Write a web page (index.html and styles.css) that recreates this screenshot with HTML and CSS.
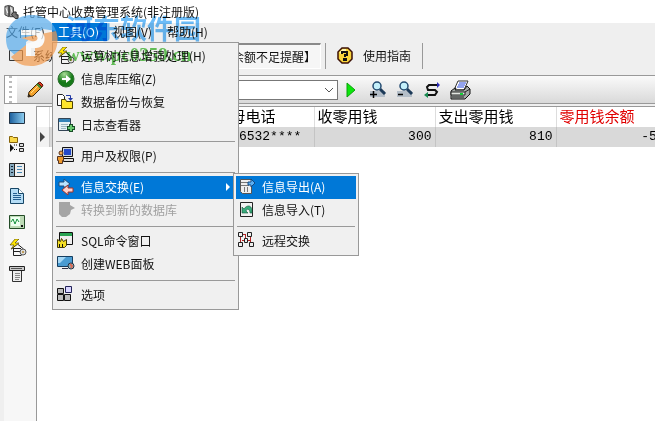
FILE: index.html
```html
<!DOCTYPE html>
<html lang="zh-CN">
<head>
  <meta charset="UTF-8">
  <title>托管中心收费管理系统(非注册版)</title>
  <link rel="stylesheet" href="styles.css">
</head>
<body>
  <header class="titlebar">
    <svg class="app-icon" viewBox="0 0 16 16"><path d="M1 2l4-1v12l-4-2zM6 1l4 2v10H6z" fill="#aaa" stroke="#333"/><path d="M2 4l2 5M7 3l2 6" stroke="#fff"/><path d="M10 8h3v3h2v4h-3l-4-4z" fill="#777" stroke="#222"/></svg>
    <span>托管中心收费管理系统(非注册版)</span>
  </header>

  <nav class="menubar">
    <button>文件(F)</button>
    <button class="open">工具(O)</button>
    <button>视图(V)</button>
    <button>帮助(H)</button>
  </nav>

  <div class="mainbar">
    <button class="system">
      <svg width="16" height="16" viewBox="0 0 16 16"><path d="M1.500 2.500h13v10h-13z" fill="#dde3e6" stroke="#333"/></svg>
      系统
    </button>
    <div class="notice">【余额不足提醒】</div>
    <button class="guide">
      <svg width="18" height="18" viewBox="0 0 18 18"><path d="M6 1h6l4 4v7l-4 4H6l-4-4V5z" fill="#f8d43c" stroke="#3c1004" stroke-width="1.500"/><path d="M4 6l3-3h3" fill="none" stroke="#fff6b0" stroke-width="2"/><path d="M6 7V5h5v3H9v2M8 12h2v1H8z" fill="none" stroke="#111" stroke-width="2"/></svg>
      使用指南
    </button>
  </div>

  <div class="toolbar">
    <div class="grip"></div>
    <button class="edit" title="编辑"><svg width="18" height="18" viewBox="0 0 18 18"><path d="M2 16l1-5L12 2l4 4-9 9z" fill="#f4a32c" stroke="#3a2509"/><path d="M5 12l7-7" stroke="#ffe08a"/><path d="M11 3l4 4" stroke="#3d8a32" stroke-width="2"/><path d="M12 2l2-1 3 3-1 2z" fill="#e33c22" stroke="#5a1408"/><path d="M2 16l1-3 2 2z" fill="#222"/></svg></button>
    <div class="combo">
      <select aria-label="查询条件"><option></option></select>
      <svg width="10" height="6" viewBox="0 0 10 6"><path d="M1 1l4 4 4-4" fill="none" stroke="#555"/></svg>
    </div>
    <button title="执行"><svg width="18" height="18" viewBox="0 0 18 18"><path d="M5 2v14l8-7z" fill="#0de60d" stroke="#0aa20a"/></svg></button>
    <button title="放大"><svg width="18" height="18" viewBox="0 0 18 18"><path d="M1 10h15v6H1z" fill="#b4bec8"/><path d="M11 8l5 5" stroke="#1d3a58" stroke-width="3"/><circle cx="8" cy="5" r="4" fill="#c4f0fb" stroke="#234a70" stroke-width="1.500"/><path d="M1 13.500h7M4.500 10v7" stroke="#000" stroke-width="1.500"/></svg></button>
    <button title="缩小"><svg width="18" height="18" viewBox="0 0 18 18"><path d="M1 10h15v6H1z" fill="#b4bec8"/><path d="M11 8l5 5" stroke="#1d3a58" stroke-width="3"/><circle cx="8" cy="5" r="4" fill="#c4f0fb" stroke="#234a70" stroke-width="1.500"/><path d="M2 13.500h5" stroke="#000" stroke-width="1.500"/></svg></button>
    <button title="刷新"><svg width="18" height="18" viewBox="0 0 18 18"><path d="M15 4H6L4 6l1 3h7l2 2-2 3H3" fill="none" stroke="#111" stroke-width="2"/><path d="M14 1l3 3-3 3z" fill="#2828b8"/><path d="M5 11v6l-4-3z" fill="#188a50"/></svg></button>
    <button class="print" title="打印"><svg width="22" height="20" viewBox="0 0 22 20"><path d="M8 1h10l-4 9H4z" fill="#fff" stroke="#333"/><path d="M9 3h7M8 5h7M7 7h7" stroke="#2848dc"/><path d="M1 11l4-3h1l-1 2h9l3-4 3 3v5l-5 5H1z" fill="#a5aaa8" stroke="#111"/><path d="M1 12h14v3H1z" fill="#e2e6e1" stroke="#222"/><path d="M15 12l5-3M2 17h12" stroke="#222"/><path d="M10 13h3v2h-3z" fill="#13cd36"/></svg></button>
  </div>

  <main class="workspace">
    <aside class="sidebar">
      <button title="桌面"><svg width="16" height="16" viewBox="0 0 16 16"><defs><linearGradient id="screen"><stop stop-color="#1b5e9c"/><stop offset="1" stop-color="#8fd0f2"/></linearGradient></defs><path d="M.5 2.500h15v11H.5z" fill="url(#screen)" stroke="#234"/></svg></button>
      <button title="结构"><svg width="16" height="16" viewBox="0 0 16 16"><path d="M.5.5h3l1 1h4v5h-8z" fill="#f9d84a" stroke="#86640b"/><path d="M1 8l4 4-4 4z" fill="#111"/><path d="M5 9h4M5 13.500h4" fill="none" stroke="#111" stroke-dasharray="1 1"/><path d="M10.500 7.500h4v3h-4zM10.500 12.500h4v3h-4z" fill="#ddd" stroke="#222"/></svg></button>
      <button title="列表"><svg width="16" height="16" viewBox="0 0 16 16"><path d="M.5 1.500h15v13H.5z" fill="#eee" stroke="#222"/><path d="M1 2h4v12H1z" fill="#87aabf"/><path d="M5.500 2v12" stroke="#222"/><path d="M2 4.500h2M2 7.500h2M2 10.500h2" stroke="#123"/><path d="M8 4.500h5M8 7.500h5M8 10.500h5" stroke="#4688b4"/></svg></button>
      <button title="文档"><svg width="16" height="16" viewBox="0 0 16 16"><path d="M1.500.5h8l5 5v10h-13z" fill="#b5ddf6" stroke="#174666"/><path d="M9.500.5v5h5" fill="#fff" stroke="#174666"/><path d="M4 5.500h4M4 7.500h8M4 9.500h8M4 11.500h8" stroke="#245f91"/></svg></button>
      <button title="监视"><svg width="16" height="16" viewBox="0 0 16 16"><path d="M.5 1.500h15v13H.5z" fill="#bddbb6" stroke="#234b27"/><path d="M2 3h9v9H2z" fill="#edfff0"/><path d="M2 8l2-3 2 5 2-5 2 3" fill="none" stroke="#13913b"/><path d="M12 12h2" stroke="#111" stroke-width="2"/></svg></button>
      <button title="运算"><svg width="18" height="18" viewBox="0 0 18 18"><use href="#i-calc"/></svg></button>
      <button title="清单"><svg width="16" height="16" viewBox="0 0 16 16"><path d="M3.500 4.500h9v11h-9z" fill="#eee" stroke="#333"/><path d="M.5.5h15v4H.5z" fill="#ccc" stroke="#222"/><path d="M2 2.500h11" stroke="#555"/><path d="M6 7.500h5M6 9.500h5M6 11.500h5M6 13.500h4" stroke="#888"/></svg></button>
    </aside>

    <section class="grid">
      <table>
        <colgroup><col class="c-mark"><col class="c-name"><col class="c-phone"><col class="c-money"><col class="c-money"><col class="c-rest"></colgroup>
        <thead>
          <tr><th></th><th></th><th>父母电话</th><th>收零用钱</th><th>支出零用钱</th><th class="red">零用钱余额</th></tr>
        </thead>
        <tbody>
          <tr><td class="mark"><i></i></td><td></td><td>1306532****</td><td class="num">300</td><td class="num">810</td><td class="num">-510</td></tr>
        </tbody>
      </table>
    </section>
  </main>

  <div class="menu tools-menu">
    <button><svg viewBox="0 0 18 18"><g id="i-calc"><path d="M2.500 10l6-5 6 5M4 9.500h8M5 12.500h6M4.500 10v6.500h8" fill="none" stroke="#222"/><path d="M6 0L1 6h4l-3 4 8-6H6l4-4z" fill="#ffe600" stroke="#443b00" stroke-width=".6"/><circle cx="14" cy="13" r="3" fill="#ddd" stroke="#555"/><circle cx="14" cy="13" r="1" fill="#b98a30"/></g></svg>运算树信息增强处理(H)</button>
    <button><svg viewBox="0 0 18 18"><defs><radialGradient id="ball" cx=".4" cy=".2"><stop stop-color="#a8dc96"/><stop offset="1" stop-color="#167a19"/></radialGradient></defs><circle cx="9" cy="9" r="8" fill="url(#ball)" stroke="#2d7030"/><path d="M5 8h4V5l5 4-5 4v-3H5z" fill="#fff"/></svg>信息库压缩(Z)</button>
    <button><svg viewBox="0 0 18 18"><path d="M.5 1.500h5l2 2v9h-7z" fill="#fff" stroke="#222"/><path d="M4.500 6.500h4l1 2h6v7h-11z" fill="#ffe52b" stroke="#4d4100"/><path d="M9 2.500h4.500V6" fill="none" stroke="#2239a4"/><path d="M11 5h5l-2.500 3z" fill="#2239a4"/></svg>数据备份与恢复</button>
    <button><svg viewBox="0 0 18 18"><path d="M1.500 2.500h12v12h-12z" fill="#e5f0f4" stroke="#345"/><path d="M2 3h11v3H2z" fill="#3483b8"/><path d="M4 8.500h7M4 10.500h6M4 12.500h5" stroke="#9bb5c2"/><path d="M14 8v8M10 12h8" stroke="#174d27" stroke-width="4"/><path d="M14 9v6M11 12h6" stroke="#68c970" stroke-width="2"/></svg>日志查看器</button>
    <hr>
    <button><svg viewBox="0 0 18 18"><path d="M5.500.5h10v9h-10z" fill="#ccd4de" stroke="#111"/><path d="M7 2h7v6H7z" fill="#2449c8"/><path d="M6.500 11.500h10v3h-10z" fill="#ddd" stroke="#111"/><circle cx="4" cy="6" r="2" fill="#f2a64e" stroke="#532"/><path d="M.5 9.500h6v4h-1v3h-4v-3h-1z" fill="#ee9a2c" stroke="#532"/></svg>用户及权限(P)</button>
    <hr>
    <button class="active"><svg viewBox="0 0 18 18"><path d="M2 4h5V1l6 5-6 4V8H2z" fill="#b9e3ff" stroke="#234d78"/><path d="M16 10h-5V7l-6 5 6 5v-3h5z" fill="#ffd2cb" stroke="#a03329"/></svg>信息交换(E)<i class="arrow"></i></button>
    <button disabled><svg viewBox="0 0 18 18"><path d="M2 1h11v3l5 3-4 2-1 4-4 3H5l-3-3z" fill="#a5a5a5"/></svg>转换到新的数据库</button>
    <hr>
    <button><svg viewBox="0 0 18 18"><path d="M2.500.5h13v12h-13z" fill="#eee" stroke="#111"/><path d="M3 1h12v3H3z" fill="#28a351"/><path d="M.5 7.500l3 2 1-3 2 3 3-2v6l-2 2h-7z" fill="#f4df26" stroke="#443a00"/><path d="M2.500 12v3M5.500 12v3" stroke="#111"/></svg>SQL命令窗口</button>
    <button><svg viewBox="0 0 18 18"><path d="M.5 1.500h15v10H.5z" fill="#4a9cd2" stroke="#163e60"/><path d="M1 2h8l-6 6H1z" fill="#a6d8f5"/><path d="M5 13.500h6" stroke="#334"/><circle cx="14" cy="11" r="3" fill="#88b2bf" stroke="#234"/><path d="M13 9l2 2-1 2" fill="none" stroke="#da6a54" stroke-width="2"/></svg>创建WEB面板</button>
    <hr>
    <button><svg viewBox="0 0 18 18"><path d="M.5 2.500h6v5h-6zM.5 8.500h6v6h-6zM7.500 8.500h6v6h-6z" fill="#bbb" stroke="#111"/><path d="M8.500.5h6v6h-6z" fill="#d9d6ff" stroke="#222258"/></svg>选项</button>
  </div>

  <div class="menu sub-menu">
    <button class="active"><svg viewBox="0 0 18 18"><path d="M2.500 1.500h11v14h-9l-2-2z" fill="#eee" stroke="#555"/><path d="M3 4.500h8M3 7.500h8M6.500 9v5M9.500 9v5" stroke="#777"/><path d="M10 4h3V1l4 4-4 4V7h-3z" fill="#59aef2" stroke="#124b84"/></svg>信息导出(A)</button>
    <button><svg viewBox="0 0 18 18"><path d="M2.500 1.500h12v14h-12z" fill="#f2f2f2" stroke="#222"/><path d="M4 6v6h6l-2-2c1-3 4-2 4 2h2c1-8-5-9-8-4z" fill="#39ac7c" stroke="#155539" stroke-width=".6"/></svg>信息导入(T)</button>
    <hr>
    <button><svg viewBox="0 0 18 18"><path d="M4 8.500h9M2.500 5v7M12.500 5v7M7.500 3v6M5 2.500h3" fill="none" stroke="#b02222"/><path d="M.5.5h4v4h-4zM9.500.5h4v4h-4zM.5 10.500h4v4h-4zM6.500 6.500h3v4h-3zM11.500 10.500h4v4h-4z" fill="#eee" stroke="#222"/></svg>远程交换</button>
  </div>

  <div class="watermark">
    <svg width="56" height="54" viewBox="0 0 56 54"><path d="M4 35C-3 17 9 1 28 1c13 0 21 7 24 16L39 15 22 28v8l-9 7z" fill="#58acec"/><path d="M52 17c6 17-6 35-25 35-9 0-15-3-20-9l15-12v11h9V28L17 24z" fill="#f39a4c"/><path d="M17 16h15c12 0 11 18 0 18h-5v8h-5V30l9-3c4-1 3-6-1-6H17z" fill="#fff"/></svg>
    <div>
      <strong>河东软件园</strong>
      <em>www.pc0359.cn</em>
    </div>
  </div>
</body>
</html>
```
FILE: styles.css
```css
* {
  box-sizing: border-box;
}

body {
  margin: 0;
  min-height: 100vh;
  display: flex;
  flex-direction: column;
  background: #efefef;
  color: #111;
  font: 12px/16px "Noto Sans CJK SC", sans-serif;
  overflow: hidden;
}

button {
  display: flex;
  align-items: center;
  border: 0;
  padding: 0;
  background: none;
  color: inherit;
  font: inherit;
  white-space: nowrap;
}

svg {
  display: block;
  flex: none;
}

/* title and menu bar */
.titlebar {
  display: flex;
  align-items: center;
  gap: 4px;
  height: 23px;
  padding-left: 4px;
  background: #fff;
}

.app-icon {
  width: 15px;
  height: 16px;
}

.menubar {
  display: flex;
  height: 19px;
  padding-bottom: 1px;
}

.menubar button {
  width: 54px;
  padding: 0 6px;
}

.menubar button:first-child {
  width: 52px;
}

.menubar .open {
  width: 55px;
  background: #0078d7;
  color: #fff;
}

/* big buttons */
.mainbar {
  display: flex;
  align-items: center;
  height: 33px;
  padding-bottom: 5px;
}

.system {
  gap: 9px;
  width: 68px;
  padding-left: 8px;
}

.notice {
  width: 253px;
  height: 26px;
  padding: 4px 4px;
  border: 1px solid #fff;
  border-top: 2px solid #8a8a8a;
  background: #f6f6f6;
  text-align: right;
  line-height: 16px;
}

.guide {
  gap: 9px;
  height: 26px;
  margin-left: 4px;
  padding: 0 11px 0 10px;
  border: solid #999;
  border-width: 0 1px;
}

/* query toolbar */
.toolbar {
  display: flex;
  align-items: center;
  gap: 9px;
  height: 29px;
  margin-left: 4px;
  border: 1px solid #999;
  border-right: 0;
  background: linear-gradient(#fafafa, #d9d9d9);
}

.grip {
  align-self: stretch;
  width: 12px;
  border-left: 4px solid #fff;
  border-right: 5px solid #fff;
  background: repeating-linear-gradient(#bbb 0 2px, #fff 2px 5px);
  background-clip: padding-box;
}

.combo {
  position: relative;
  width: 286px;
  margin-left: -1px;
}

.combo select {
  display: block;
  width: 100%;
  height: 20px;
  appearance: none;
  border: 1px solid #777;
  border-radius: 0;
  background: #fff;
}

.combo svg {
  position: absolute;
  right: 4px;
  top: 7px;
}

.combo + button {
  margin-left: -5px;
}

/* work area */
.workspace {
  display: flex;
  flex: 1;
  padding-left: 4px;
}

.sidebar {
  display: flex;
  flex-direction: column;
  gap: 10px;
  width: 32px;
  padding: 6px 5px;
  background: #f7f7f7;
}

.sidebar button {
  height: 16px;
}

.grid {
  flex: 1;
  min-width: 0;
  margin-top: 2px;
  overflow: hidden;
  background: #fff;
  border: solid #999;
  border-width: 1px 0 0 1px;
}

.grid table {
  width: 639px;
  table-layout: fixed;
  border-collapse: collapse;
  color: #000;
  font-size: 15px;
}

.c-mark {
  width: 12px;
}

.c-name {
  width: 163px;
}

.c-phone {
  width: 102px;
}

.c-money {
  width: 121px;
}

.c-rest {
  width: 120px;
}

th, td {
  height: 20px;
  padding: 0 3px;
  border-right: 1px solid #ddd;
  line-height: 18px;
  text-align: left;
  white-space: nowrap;
}

th {
  padding-bottom: 2px;
  font-weight: 400;
}

th.red {
  color: #e00000;
}

td {
  background: #d9d9d9;
  border-color: #c4c4c4;
  font-family: "Liberation Mono", monospace;
  font-size: 13px;
}

td.num {
  text-align: right;
}

td.mark {
  background: #f2f2f2;
}

.mark i {
  display: block;
  width: 5px;
  border: 5px solid transparent;
  border-left-color: #444;
  border-right: 0;
}

/* drop-down menus */
.menu {
  position: absolute;
  padding: 2px;
  border: 1px solid #999;
  background: #f0f0f0;
}

.tools-menu {
  left: 52px;
  top: 42px;
  width: 187px;
}

.sub-menu {
  left: 233px;
  top: 173px;
  width: 126px;
}

.menu button {
  width: 100%;
  height: 23px;
  gap: 6px;
  padding: 0 0 2px 2px;
}

.menu svg {
  width: 18px;
  height: 18px;
}

.menu hr {
  height: 1px;
  margin: 4px 1px 3px;
  border: 0;
  background: #999;
}

.menu .active {
  background: #0078d7;
  color: #fff;
}

.menu button:disabled {
  color: #a0a0a0;
}

.arrow {
  margin-left: auto;
  margin-right: 6px;
  border: 4px solid transparent;
  border-left-color: #fff;
  border-right: 0;
}

/* site mark laid over the window */
.watermark {
  position: absolute;
  left: 4px;
  top: 14px;
  display: flex;
  gap: 6px;
  pointer-events: none;
}

.watermark svg {
  opacity: .7;
}

.watermark strong,
.watermark em {
  display: block;
  mix-blend-mode: multiply;
}

.watermark strong {
  color: #6cbcf8;
  font-size: 27px;
  line-height: 28px;
}

.watermark em {
  color: #68c85c;
  font: bold 19px/26px "Liberation Serif", serif;
}
```
